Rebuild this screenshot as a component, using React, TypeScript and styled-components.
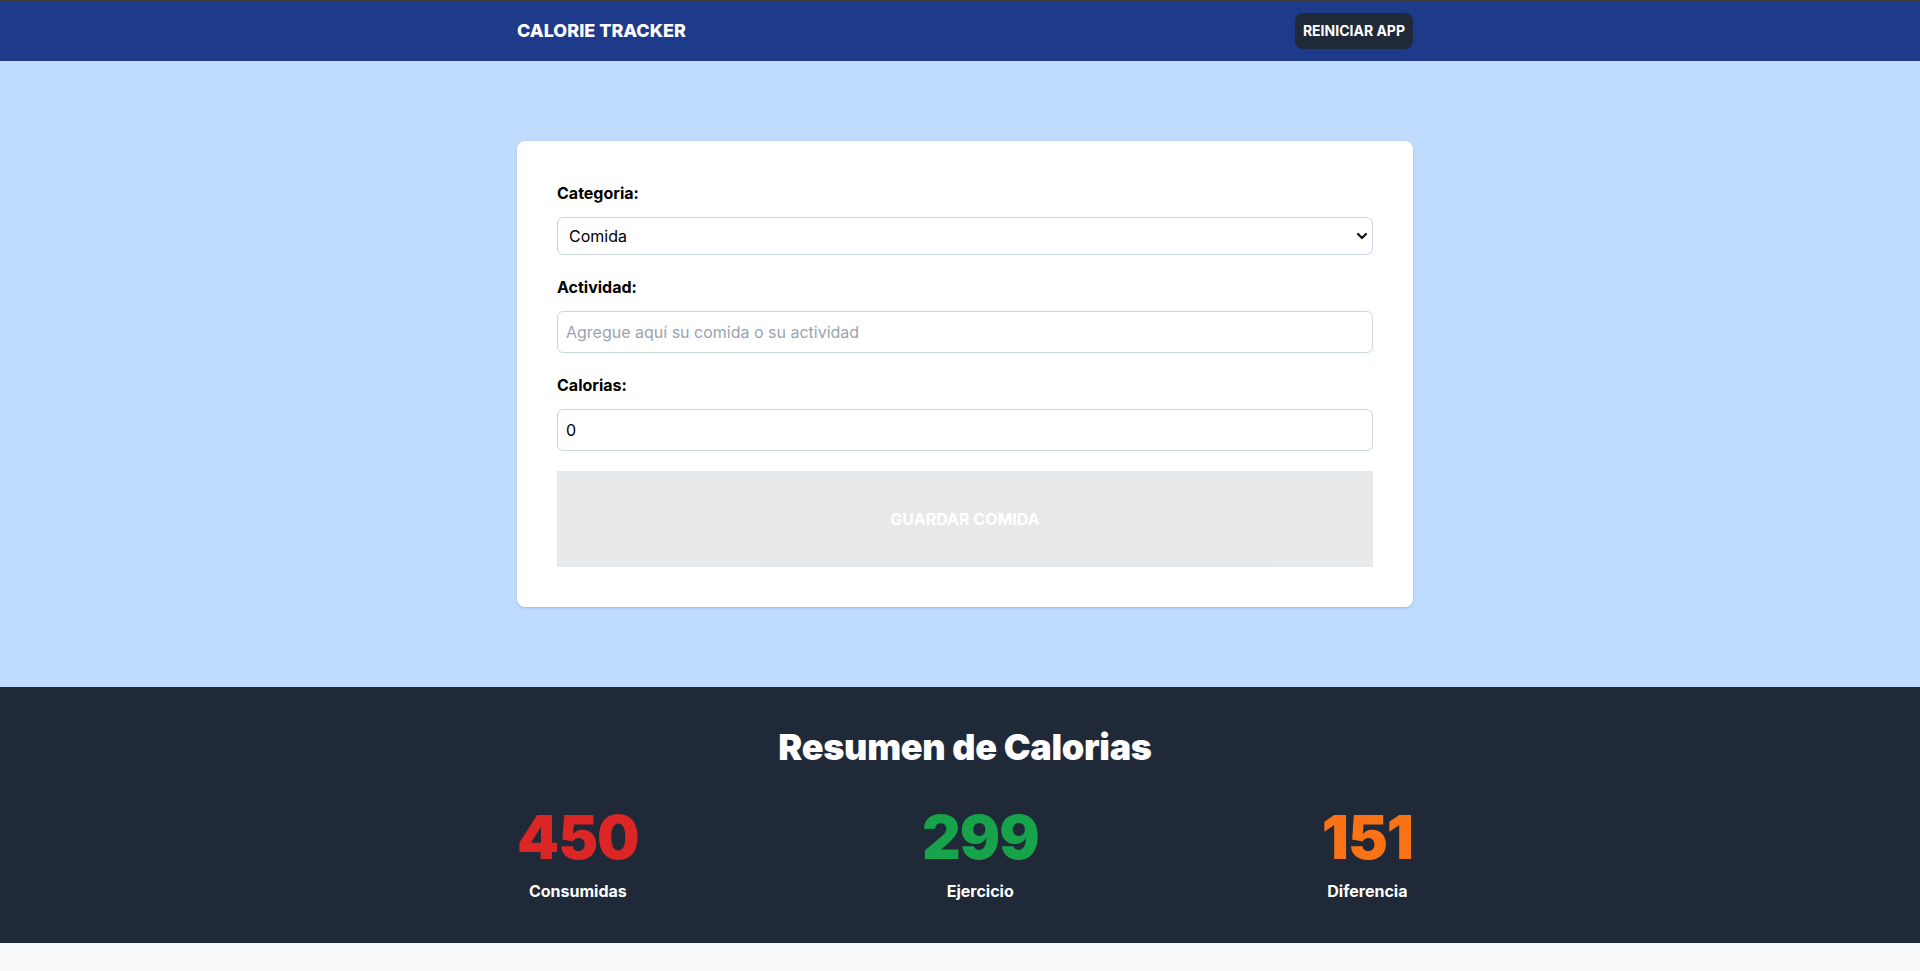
import React, { useState } from "react";
import styled, { createGlobalStyle } from "styled-components";

const GlobalStyle = createGlobalStyle`
  *, *::before, *::after { box-sizing: border-box; }
  html, body { margin: 0; padding: 0; }
  body {
    background: #f9fafb;
    font-family: Inter, "Noto Sans", "Liberation Sans", sans-serif;
    color: #000;
    -webkit-font-smoothing: antialiased;
  }
`;

const Header = styled.header`
  background: #1e3a8a;
  border-top: 1px solid #3c3c3c;
  padding: 12px 0 12px 10px;
`;

const Bar = styled.div`
  max-width: 896px;
  margin: 0 auto;
  display: flex;
  justify-content: space-between;
  align-items: center;
`;

const Brand = styled.h1`
  margin: 0;
  font-size: 18px;
  line-height: 28px;
  font-weight: 800;
  text-transform: uppercase;
  color: #fff;
`;

const ResetButton = styled.button`
  font-family: inherit;
  background: #1f2937;
  color: #fff;
  border: none;
  border-radius: 8px;
  padding: 8px;
  font-size: 14px;
  line-height: 20px;
  font-weight: 700;
  text-transform: uppercase;
  cursor: pointer;
`;

const Main = styled.section`
  background: #bfdbfe;
  padding: 80px 0 80px 10px;
`;

const Card = styled.form`
  max-width: 896px;
  margin: 0 auto;
  background: #fff;
  border-radius: 8px;
  padding: 40px;
  box-shadow: 0 1px 3px rgba(0, 0, 0, 0.1), 0 1px 2px rgba(0, 0, 0, 0.06);
  display: grid;
  gap: 20px;
`;

const Field = styled.div`
  display: grid;
  gap: 12px;
`;

const Label = styled.label`
  font-size: 16px;
  line-height: 24px;
  font-weight: 700;
`;

const SelectWrap = styled.div`
  position: relative;
`;

const Select = styled.select`
  appearance: none;
  -webkit-appearance: none;
  width: 100%;
  height: 38px;
  border: 1px solid #cbd5e1;
  border-radius: 6px;
  background: #fff;
  padding: 0 30px 0 11px;
  font-family: inherit;
  font-size: 16px;
  color: #000;
  outline: none;
`;

const Chevron = styled.svg`
  position: absolute;
  right: 5px;
  top: 50%;
  transform: translateY(-50%);
  pointer-events: none;
`;

const Input = styled.input`
  width: 100%;
  padding: 8px;
  border: 1px solid #cbd5e1;
  border-radius: 6px;
  font-family: inherit;
  font-size: 16px;
  line-height: 24px;
  color: #000;
  outline: none;
  &::placeholder { color: #9ca3af; }
`;

const Submit = styled.button`
  height: 96px;
  border: none;
  background: #1f2937;
  opacity: 0.1;
  color: #fff;
  font-family: inherit;
  font-size: 16px;
  font-weight: 700;
  text-transform: uppercase;
  cursor: pointer;
  &:disabled { cursor: default; }
`;

const Summary = styled.section`
  background: #1f2937;
  padding: 40px 0 40px 10px;
`;

const SummaryTitle = styled.h2`
  margin: 0;
  text-align: center;
  color: #fff;
  font-size: 36px;
  line-height: 40px;
  font-weight: 900;
  letter-spacing: -0.3px;
`;

const Stats = styled.div`
  max-width: 896px;
  margin: 40px auto 0;
  display: flex;
  justify-content: space-between;
`;

const Stat = styled.p`
  margin: 0;
  display: flex;
  flex-direction: column;
  align-items: center;
  gap: 12px;
  color: #fff;
  font-size: 16px;
  line-height: 24px;
  font-weight: 700;
`;

const Amount = styled.span<{ $color: string }>`
  font-size: 60px;
  line-height: 1;
  font-weight: 900;
  letter-spacing: -1px;
  color: ${(p) => p.$color};
`;

export default function App() {
  const [category, setCategory] = useState("1");
  const [name, setName] = useState("");
  const [calories, setCalories] = useState("0");
  const stats = [
    { value: 450, label: "Consumidas", color: "#dc2626" },
    { value: 299, label: "Ejercicio", color: "#16a34a" },
    { value: 151, label: "Diferencia", color: "#f97316" },
  ];
  return (
    <>
      <GlobalStyle />
      <Header>
        <Bar>
          <Brand>Calorie Tracker</Brand>
          <ResetButton type="button">Reiniciar App</ResetButton>
        </Bar>
      </Header>
      <Main>
        <Card onSubmit={(e) => e.preventDefault()}>
          <Field>
            <Label htmlFor="category">Categoria:</Label>
            <SelectWrap>
              <Select id="category" value={category} onChange={(e) => setCategory(e.target.value)}>
                <option value="1">Comida</option>
                <option value="2">Ejercicio</option>
              </Select>
              <Chevron width="12" height="8" viewBox="0 0 12 8">
                <path d="M2 2 L6 6 L10 2" fill="none" stroke="#111" strokeWidth="2.2" strokeLinecap="round" strokeLinejoin="round" />
              </Chevron>
            </SelectWrap>
          </Field>
          <Field>
            <Label htmlFor="name">Actividad:</Label>
            <Input
              id="name"
              type="text"
              placeholder="Agregue aquí su comida o su actividad"
              value={name}
              onChange={(e) => setName(e.target.value)}
            />
          </Field>
          <Field>
            <Label htmlFor="calories">Calorias:</Label>
            <Input id="calories" type="number" value={calories} onChange={(e) => setCalories(e.target.value)} />
          </Field>
          <Submit type="submit" disabled>
            Guardar Comida
          </Submit>
        </Card>
      </Main>
      <Summary>
        <SummaryTitle>Resumen de Calorias</SummaryTitle>
        <Stats>
          {stats.map((s) => (
            <Stat key={s.label}>
              <Amount $color={s.color}>{s.value}</Amount>
              {s.label}
            </Stat>
          ))}
        </Stats>
      </Summary>
    </>
  );
}
